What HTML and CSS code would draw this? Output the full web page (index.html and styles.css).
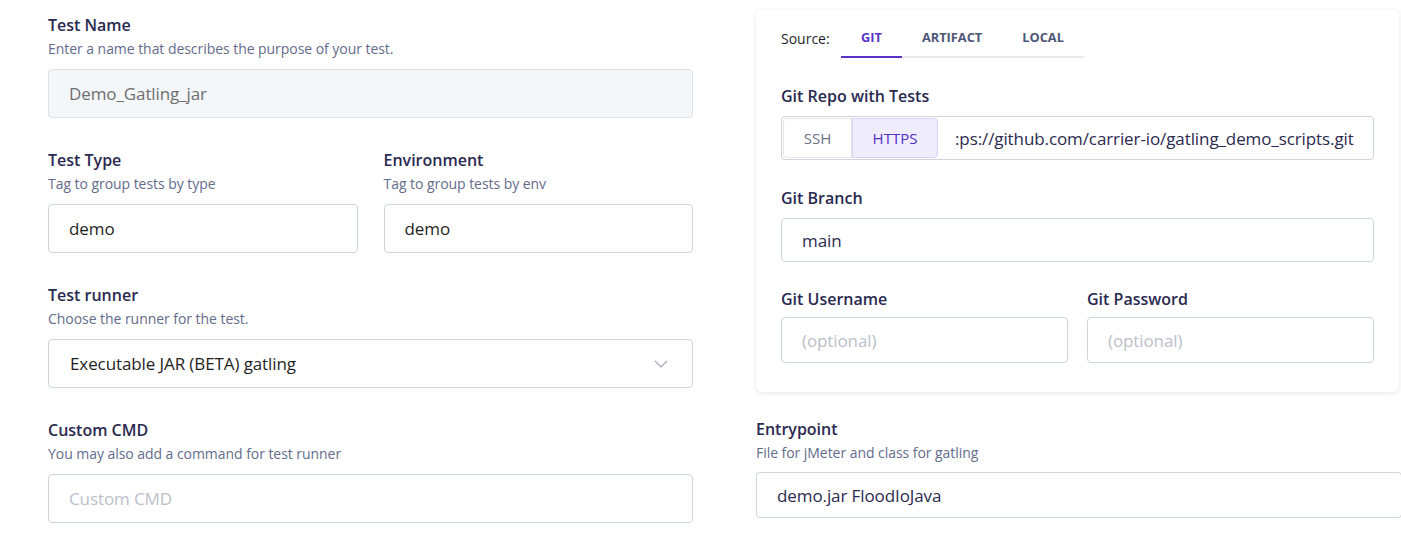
FILE: index.html
```html
<!DOCTYPE html>
<html>
<head>
<meta charset="utf-8">
<link rel="stylesheet" href="styles.css">
</head>
<body>
<div class="page">
  <div class="col-left">
    <div class="field">
      <div class="label">Test Name</div>
      <div class="desc">Enter a name that describes the purpose of your test.</div>
      <div class="input disabled">Demo_Gatling_jar</div>
    </div>
    <div class="row2">
      <div class="field">
        <div class="label">Test Type</div>
        <div class="desc">Tag to group tests by type</div>
        <div class="input">demo</div>
      </div>
      <div class="field">
        <div class="label">Environment</div>
        <div class="desc">Tag to group tests by env</div>
        <div class="input">demo</div>
      </div>
    </div>
    <div class="field">
      <div class="label">Test runner</div>
      <div class="desc">Choose the runner for the test.</div>
      <div class="input select">
        <span>Executable JAR (BETA) gatling</span>
        <svg class="chev" width="14" height="8" viewBox="0 0 14 8"><path d="M1 1l6 6 6-6" fill="none" stroke="#a0a6b4" stroke-width="1.1"/></svg>
      </div>
    </div>
    <div class="field">
      <div class="label">Custom CMD</div>
      <div class="desc">You may also add a command for test runner</div>
      <div class="input placeholder">Custom CMD</div>
    </div>
  </div>
  <div class="col-right">
    <div class="card">
      <div class="source">
        <span class="source-label">Source:</span>
        <div class="tabs">
          <div class="tab active">GIT</div>
          <div class="tab">ARTIFACT</div>
          <div class="tab">LOCAL</div>
        </div>
      </div>
      <div class="cfield">
        <div class="label">Git Repo with Tests</div>
        <div class="group">
          <div class="seg">
            <div class="seg-btn">SSH</div>
            <div class="seg-btn on">HTTPS</div>
          </div>
          <div class="group-text">:ps://github.com/carrier-io/gatling_demo_scripts.git</div>
        </div>
      </div>
      <div class="cfield">
        <div class="label">Git Branch</div>
        <div class="input small navy">main</div>
      </div>
      <div class="row2 crow">
        <div class="cfield">
          <div class="label">Git Username</div>
          <div class="input small tall placeholder">(optional)</div>
        </div>
        <div class="cfield">
          <div class="label">Git Password</div>
          <div class="input small tall placeholder">(optional)</div>
        </div>
      </div>
    </div>
    <div class="field entry">
      <div class="label">Entrypoint</div>
      <div class="desc">File for jMeter and class for gatling</div>
      <div class="input small tall navy">demo.jar FloodIoJava</div>
    </div>
  </div>
</div>
</body>
</html>
```

FILE: styles.css
```css
* { box-sizing: border-box; }
html, body { margin: 0; padding: 0; background: #fff; }
body {
  font-family: "Open Sans", "Noto Sans", sans-serif;
  color: #2b2a50;
  overflow: hidden;
}
.page {
  display: grid;
  grid-template-columns: 645px 646px;
  column-gap: 63px;
  padding: 10px 0 0 48px;
}
.col-left { padding-top: 5px; display: flex; flex-direction: column; gap: 32px; }
.field { display: flex; flex-direction: column; }
.label {
  font-size: 16px;
  font-weight: 600;
  line-height: 20px;
  color: #2a2950;
}
.desc {
  font-size: 14px;
  line-height: 18px;
  margin-top: 5px;
  color: #646c8b;
  letter-spacing: -0.05px;
}
.input {
  margin-top: 11px;
  height: 49px;
  border: 1px solid #cfd4dc;
  border-radius: 4px;
  padding: 0 20px;
  display: flex;
  align-items: center;
  font-size: 17px;
  color: #1f1f1f;
  background: #fff;
  letter-spacing: -0.1px;
}
.input.disabled { background: #f4f7fa; border-color: #dde2e8; color: #6e6e6e; }
.input.placeholder { color: #bcc0c9; }
.input.navy { color: #2b2a50; }
.select { justify-content: space-between; padding-left: 21px; padding-right: 24px; }
.chev { display: block; }
.row2 { display: grid; grid-template-columns: 1fr 1fr; column-gap: 26px; }

.col-right { display: flex; flex-direction: column; }
.card {
  width: 643px;
  background: #fff;
  border-radius: 6px;
  box-shadow: 0 1px 5px rgba(40, 45, 80, 0.12);
  padding: 16px 25px 29px 25px;
}
.source { display: flex; align-items: flex-start; }
.source-label { font-size: 14px; line-height: 22px; padding-top: 2px; width: 60px; color: #1f1f2e; }
.tabs { display: flex; border-bottom: 2px solid #e8eaef; }
.tab {
  font-size: 12.8px;
  font-weight: 700;
  padding: 2px 20px 10px 20px;
  line-height: 18px;
  color: #4d5679;
  margin-bottom: -2px;
  border-bottom: 2px solid transparent;
}
.tab.active { color: #5933c6; border-bottom-color: #5933c6; }
.cfield { display: flex; flex-direction: column; margin-top: 28px; }
.cfield .input { margin-top: 10px; }
.input.small { height: 44px; }
.input.tall { height: 46px; }
.crow .cfield { margin-top: 27px; }
.crow .cfield .input { margin-top: 8px; }
.crow { column-gap: 19px; }
.group {
  margin-top: 10px;
  height: 44px;
  border: 1px solid #cfd4dc;
  border-radius: 4px;
  display: flex;
  align-items: center;
  padding: 1px;
}
.seg { display: flex; height: 100%; }
.seg-btn {
  display: flex;
  align-items: center;
  justify-content: center;
  font-size: 15px;
  color: #6b7188;
  border: 1px solid #e2e5ea;
  border-radius: 4px 0 0 4px;
  width: 69px;
}
.seg-btn.on {
  width: 86px;
  background: #efecfd;
  border-color: #d8d2f6;
  color: #4f2fc0;
  border-radius: 0 4px 4px 0;
}
.group-text { font-size: 17px; color: #2b2a50; padding-left: 17px; letter-spacing: -0.1px; white-space: nowrap; }
.entry { margin-top: 27px; }
.entry .desc { margin-top: 5px; }
.entry .input { margin-top: 10px; }
```
